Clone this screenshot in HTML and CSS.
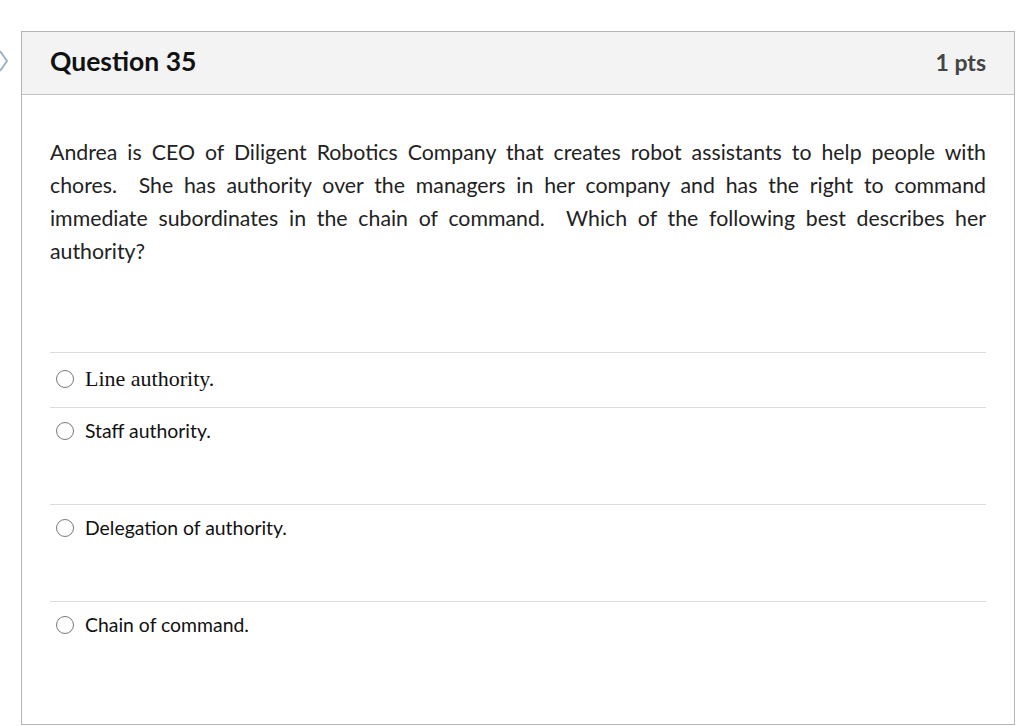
FILE: index.html
```html
<!DOCTYPE html>
<html>
<head>
<meta charset="utf-8">
<link rel="stylesheet" href="styles.css">
</head>
<body>
<div class="page">
  <svg class="chevron" width="10" height="24" viewBox="0 0 10 24"><path d="M1 2 L8 12 L1 22" fill="none" stroke="#9fb3c5" stroke-width="2"/></svg>
  <div class="card">
    <div class="card-header">
      <span class="title">Question 35</span>
      <span class="pts">1 pts</span>
    </div>
    <div class="card-body">
      <p class="question">Andrea is CEO of Diligent Robotics Company that creates robot assistants to help people with chores.&nbsp; She has authority over the managers in her company and has the right to command immediate subordinates in the chain of command.&nbsp; Which of the following best describes her authority?</p>
      <div class="answers">
        <div class="answer first"><span class="radio"></span><span class="label serif">Line authority.</span></div>
        <div class="answer tall"><span class="radio"></span><span class="label">Staff authority.</span></div>
        <div class="answer tall"><span class="radio"></span><span class="label">Delegation of authority.</span></div>
        <div class="answer last"><span class="radio"></span><span class="label">Chain of command.</span></div>
      </div>
    </div>
  </div>
</div>
</body>
</html>
```
FILE: styles.css
```css
html, body {
  margin: 0;
  padding: 0;
  background: #fff;
}
body {
  font-family: Lato, "Open Sans", sans-serif;
  color: #2d2d2d;
}
.page {
  position: relative;
  padding: 31px 9px 0 21px;
}
.chevron {
  position: absolute;
  left: -1px;
  top: 49px;
}
.card {
  border: 1px solid #b5b5b5;
  height: 694px;
  box-sizing: border-box;
  overflow: hidden;
}
.card-header {
  display: flex;
  justify-content: space-between;
  align-items: center;
  height: 63px;
  box-sizing: border-box;
  padding: 0 28px 5px 28px;
  background: #f3f3f3;
  border-bottom: 1px solid #c4c4c4;
}
.title {
  font-size: 26.5px;
  font-weight: 700;
  color: #111;
}
.pts {
  font-size: 23px;
  font-weight: 700;
  color: #444;
  padding-top: 2px;
}
.card-body {
  padding: 41px 28px 0 28px;
}
.question {
  margin: 0;
  font-size: 21.3px;
  line-height: 33px;
  text-align: justify;
  color: #222;
}
.answers {
  margin-top: 84px;
}
.answer {
  display: flex;
  align-items: flex-start;
  border-top: 1px solid #dcdcdc;
  padding: 11px 0 0 6px;
  box-sizing: border-box;
}
.answer.first {
  height: 55px;
  padding-top: 14px;
}
.answer.tall {
  height: 97px;
}
.answer.last {
  height: 124px;
}
.radio {
  width: 18px;
  height: 18px;
  box-sizing: border-box;
  border: 1.5px solid #7a7a7a;
  border-radius: 50%;
  margin-top: 3px;
  flex: none;
}
.label {
  margin-left: 11px;
  font-size: 19.4px;
  line-height: 24px;
  color: #111;
}
.label.serif {
  font-family: "Liberation Serif", "Times New Roman", serif;
  font-size: 22px;
}
```
